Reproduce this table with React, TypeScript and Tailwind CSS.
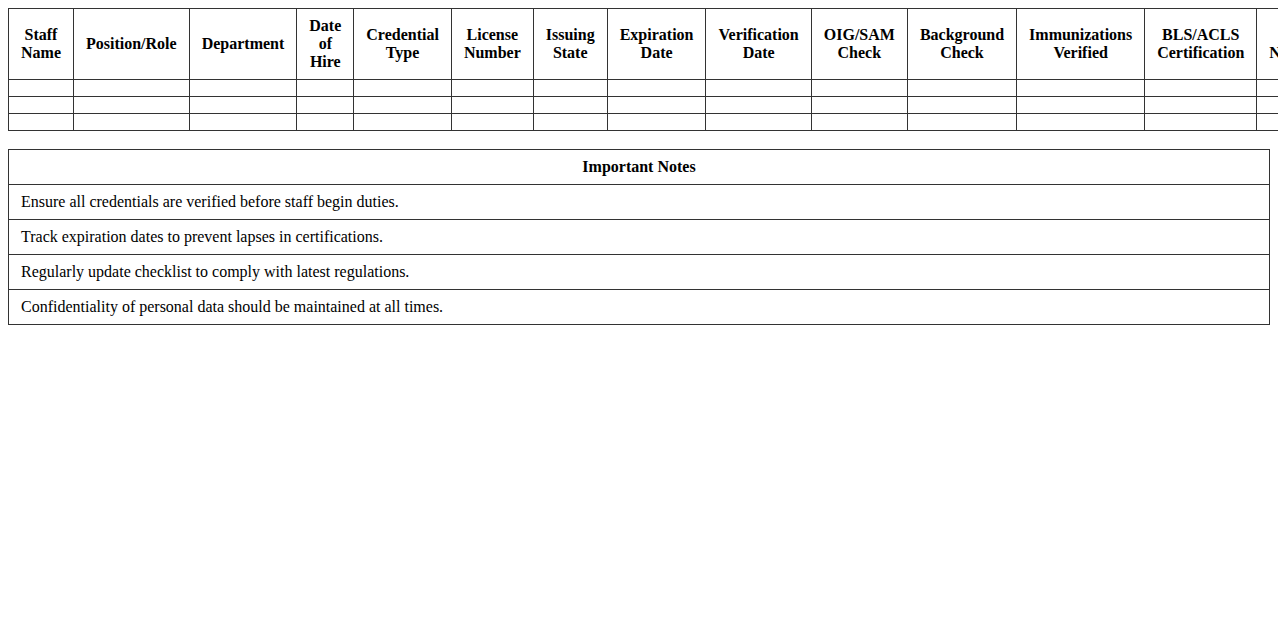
import React from "react";

const headers: string[] = [
  "Staff Name",
  "Position/Role",
  "Department",
  "Date of Hire",
  "Credential Type",
  "License Number",
  "Issuing State",
  "Expiration Date",
  "Verification Date",
  "OIG/SAM Check",
  "Background Check",
  "Immunizations Verified",
  "BLS/ACLS Certification",
  "NPI Number",
];

const notes: string[] = [
  "Ensure all credentials are verified before staff begin duties.",
  "Track expiration dates to prevent lapses in certifications.",
  "Regularly update checklist to comply with latest regulations.",
  "Confidentiality of personal data should be maintained at all times.",
];

export default function App() {
  return (
    <div
      className="p-2 bg-white text-black text-[16px] leading-[18px]"
      style={{ fontFamily: '"Liberation Serif", "Times New Roman", serif' }}
    >
      <table className="border-collapse mb-[18px]">
        <thead>
          <tr>
            {headers.map((h) => (
              <th
                key={h}
                className="border border-[#333] px-3 py-2 font-bold text-center align-middle"
              >
                {h}
              </th>
            ))}
          </tr>
        </thead>
        <tbody>
          {[0, 1, 2].map((r) => (
            <tr key={r}>
              {headers.map((h) => (
                <td key={h} className="border border-[#333] px-3 py-2"></td>
              ))}
            </tr>
          ))}
        </tbody>
      </table>

      <table className="w-full border-collapse">
        <thead>
          <tr>
            <th className="border border-[#333] px-3 py-2 font-bold text-center">
              Important Notes
            </th>
          </tr>
        </thead>
        <tbody>
          {notes.map((n) => (
            <tr key={n}>
              <td className="border border-[#333] px-3 py-2 text-left">{n}</td>
            </tr>
          ))}
        </tbody>
      </table>
    </div>
  );
}
